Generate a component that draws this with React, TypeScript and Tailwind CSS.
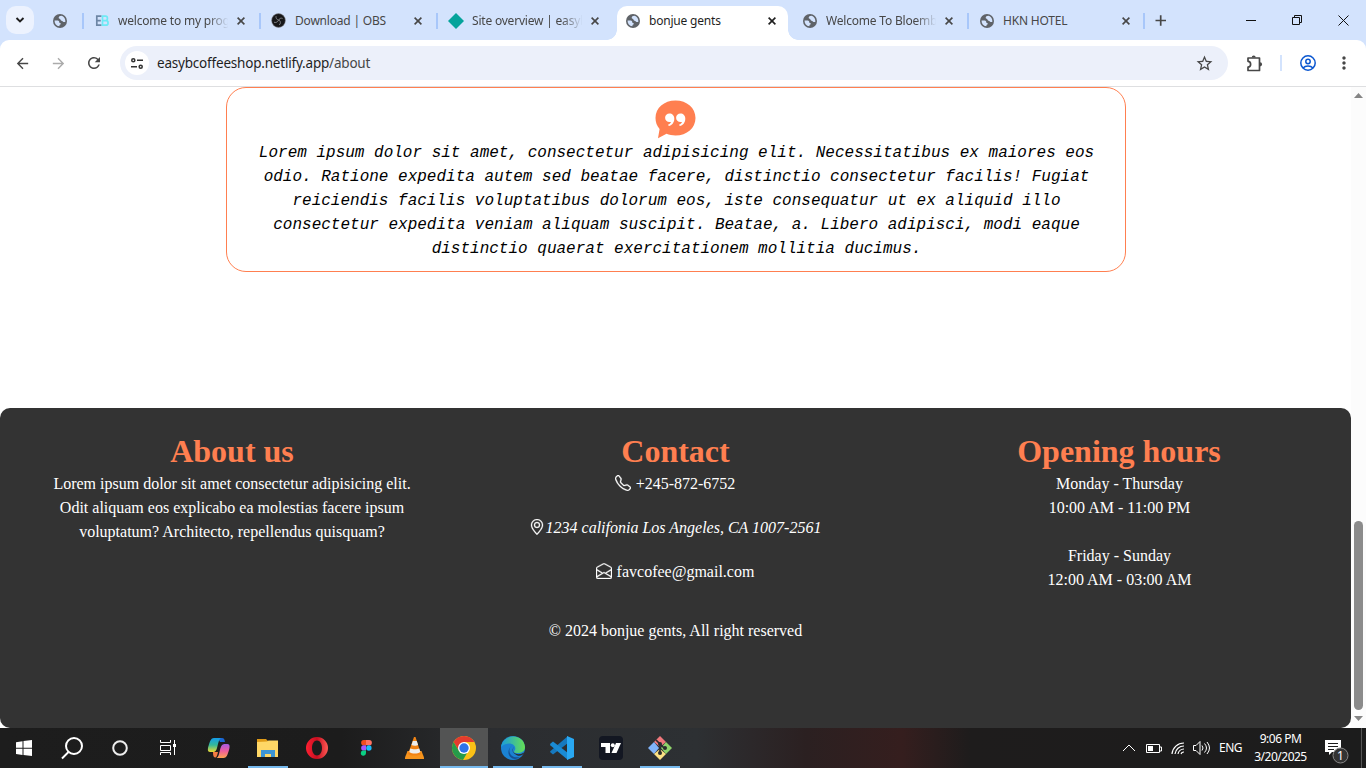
import React from "react";
import { BsTelephone, BsGeoAlt, BsEnvelopeOpen } from "react-icons/bs";
import { MdStarOutline, MdArrowBack, MdArrowForward, MdRefresh, MdMoreVert } from "react-icons/md";

function Globe() {
  return (
    <svg width="14" height="14" viewBox="0 0 14 14" className="shrink-0">
      <circle cx="7" cy="7" r="7" fill="#5f6368" />
      <path d="M1.6 6.5h2.6c1.3 0 2 .5 2 1.5 0 .7.4 1 1.4 1v1.5c-.7 0-1.1.4-1.3 1.7C3.300 12 1.500 9.500 1.600 6.500zM8.200 1.700C6.700 1.800 5.800 2.500 5.700 3.600c0 1 .6 1.400 1.500 1.500.2 1.200.8 1.800 2.100 1.800.6.900 1.500 1.100 3 1.100.5-3-1.200-5.600-4.100-6.300z" fill="#d3e3fd" />
    </svg>
  );
}

function Eb() {
  return (
    <svg width="14" height="14" viewBox="0 0 14 14" fill="none" className="shrink-0">
      <path d="M6.500 2.200H1.800v9h4.700M1.800 6.700h4" stroke="#6d86a5" strokeWidth="1.700" />
      <path d="M7.500 2.200h3.200c2.300 0 2.300 4.400 0 4.400H7.500h3.600c2.600 0 2.600 4.600 0 4.600H7.500z" stroke="#6deaf5" strokeWidth="1.700" />
    </svg>
  );
}

function Obs() {
  return (
    <svg width="15" height="15" viewBox="0 0 15 15" fill="none" className="shrink-0">
      <circle cx="7.500" cy="7.500" r="6.900" fill="#171719" stroke="#8c8f94" strokeWidth=".5" />
      <path d="M5 3.200c-.2 2 .8 3.500 2.700 4M11.600 5.400C9.800 4.700 8.200 5.500 7.700 7.200M8.200 12c1.600-1.300 1.600-3.400 0-4.800M3 9.200c1.600.8 3.400 0 4.600-2" stroke="#96989c" strokeWidth=".8" />
    </svg>
  );
}

function Cross({ dark }: { dark?: boolean }) {
  return (
    <svg width="8" height="8" viewBox="0 0 8 8" className="shrink-0">
      <path d="M.6.6l6.800 6.800M7.400.6L.6 7.400" stroke={dark ? "#1f1f1f" : "#474747"} strokeWidth="1.600" />
    </svg>
  );
}

function Tab({ icon, title, width, fade, sep = true }: { icon: React.ReactNode; title: string; width: string; fade?: boolean; sep?: boolean }) {
  return (
    <div className={`flex h-[41px] shrink-0 items-center ${width}`}>
      <div className="flex w-[15px] shrink-0 justify-center">{icon}</div>
      <div className={`ml-[9px] w-[115px] overflow-hidden whitespace-nowrap text-[#474747] ${fade ? "[mask-image:linear-gradient(to_right,#000_78%,transparent_96%)]" : ""}`}>{title}</div>
      <div className="ml-[4px] flex"><Cross /></div>
      {sep && <div className="ml-auto h-4 w-[2px] bg-[#a8c7fa]" />}
    </div>
  );
}

function TabStrip() {
  return (
    <div className="flex h-10 bg-[#d3e3fd] text-[12px] tracking-[-0.2px]">
      <div className="ml-[6px] mt-[6px] flex size-7 shrink-0 items-center justify-center rounded-[10px] bg-[#ecf2fe]">
        <svg width="10" height="6" viewBox="0 0 10 6" fill="none"><path d="M1.500 1L5 4.500 8.500 1" stroke="#1f1f1f" strokeWidth="1.900" /></svg>
      </div>
      <div className="flex h-[41px] w-[50px] shrink-0 items-center pl-[19px]"><Globe /><div className="ml-auto h-4 w-[2px] shrink-0 bg-[#a8c7fa]" /></div>
      <div className="w-[10px] shrink-0" />
      <Tab icon={<Eb />} title="welcome to my prog" width="w-[167px]" fade />
      <div className="w-[10px] shrink-0" />
      <Tab icon={<Obs />} title="Download | OBS" width="w-[167px]" />
      <div className="w-[10px] shrink-0" />
      <Tab icon={<svg width="16" height="16" viewBox="0 0 16 16" className="shrink-0"><path d="M8 0l8 8-8 8-8-8z" fill="#05a39b" /></svg>} title="Site overview | easyb" width="w-[159px]" fade sep={false} />
      <div className="flex h-10 w-[201px] shrink-0 items-end overflow-hidden">
        <div className="size-[10px] shrink-0 bg-[radial-gradient(circle_at_0_0,transparent_9.500px,white_10px)]" />
        <div className="flex h-[34px] w-[171px] shrink-0 items-center rounded-t-[10px] bg-white pb-[5px] pl-[9px]">
          <Globe /><span className="ml-[9px] w-[114px] text-[#1f1f1f]">bonjue gents</span><span className="ml-[5px]"><Cross dark /></span>
        </div>
        <div className="size-[10px] shrink-0 bg-[radial-gradient(circle_at_100%_0,transparent_9.500px,white_10px)]" />
      </div>
      <div className="-ml-[6px] shrink-0"><Tab icon={<Globe />} title="Welcome To Bloemb" width="w-[167px]" fade /></div>
      <div className="w-[10px] shrink-0" />
      <Tab icon={<Globe />} title="HKN HOTEL" width="w-[166px]" />
      <svg width="222" height="40" viewBox="1145 0 222 40" fill="none" className="shrink-0">
        <path d="M1155.500 20.500h10.500M1160.700 15.200v10.500" stroke="#474747" strokeWidth="1.700" />
        <path d="M1246 20.500h10M1292.500 17.500h7v7h-7zM1294.500 17v-1.500h7v7H1300M1338.500 15.500l10 10M1348.500 15.500l-10 10" stroke="#111" />
      </svg>
    </div>
  );
}

function Toolbar() {
  return (
    <div className="h-[47px] bg-[#d3e3fd]">
      <div className="flex h-[47px] items-center rounded-t-[9px] border-b border-[#dedfe1] bg-white text-[#474747]">
        <MdArrowBack size={17} className="ml-[14px]" />
        <MdArrowForward size={17} className="ml-[19px] text-[#ababab]" />
        <MdRefresh size={18} className="ml-[18px]" />
        <div className="ml-[17px] flex h-[34px] w-[1108px] items-center rounded-full bg-[#ecf0fa]">
          <div className="ml-[5px] flex size-6 items-center justify-center rounded-full bg-white">
            <svg width="12" height="11" viewBox="0 0 12 11" fill="none" stroke="#333" strokeWidth="1.500"><circle cx="2.300" cy="2.300" r="1.550" /><path d="M6 2.300h6M0 8.700h6" /><circle cx="9.700" cy="8.700" r="1.550" /></svg>
          </div>
          <div className="ml-[8px] text-[13.500px] tracking-[-0.2px] text-[#1f1f1f]">easybcoffeeshop.netlify.app<span className="text-[#474747]">/about</span></div>
          <MdStarOutline size={19} className="ml-auto mr-[14px]" />
        </div>
        <svg width="19" height="19" viewBox="0 0 19 19" className="ml-[17px]">
          <path d="M3 4h11.500v12.500H3v-3.300c3.500-.3 3.500-5.600 0-5.900z" fill="none" stroke="#474747" strokeWidth="1.700" strokeLinejoin="round" />
          <path d="M6.700 3.500a2 2 0 014 0zM15 8.200a2.100 2.100 0 010 4.200z" fill="#474747" />
        </svg>
        <div className="ml-[16px] h-4 w-[2px] bg-[#d3e3fd]" />
        <svg width="16" height="16" viewBox="0 0 16 16" fill="none" stroke="#0b57d0" strokeWidth="1.500" className="ml-[18px]"><circle cx="8" cy="8" r="7.200" /><circle cx="8" cy="6.500" r="2.200" /><path d="M3 13c2.500-2.700 7.500-2.700 10 0" /></svg>
        <MdMoreVert size={20} className="ml-[18px]" />
      </div>
    </div>
  );
}

function Quote() {
  return (
    <section className="mx-auto h-[185px] w-[900px] rounded-[20px] border border-[#ff7f50] pt-[11px] text-center">
      <svg width="42" height="40" viewBox="654 98.500 42 40" className="ml-[427px]">
        <path d="M675.500 100c11.500 0 20 7.600 20 17.500S687 135 675.500 135c-3.200 0-6.300-.6-9-1.700l-8.500 4.400 1.600-9.300c-2.700-2.900-4.100-6.700-4.100-10.900 0-9.900 8.500-17.500 20-17.500z" fill="#ff7f50" />
        <g fill="#fff"><path d="M669.500 113c2.700 0 4.800 2 4.800 5.200 0 3.800-2.500 6.800-5.600 7.400l-.6-1.500c1.500-.5 2.600-1.500 2.900-2.700-3.400.8-5.900-1.300-5.900-4.100 0-2.400 1.900-4.300 4.400-4.300zM680.500 113c2.700 0 4.800 2 4.800 5.200 0 3.800-2.500 6.800-5.600 7.400l-.6-1.500c1.500-.5 2.600-1.500 2.900-2.700-3.400.8-5.900-1.300-5.900-4.100 0-2.400 1.900-4.300 4.400-4.300z" /></g>
      </svg>
      <p className="mt-[2px] pl-[2px] font-['Liberation_Mono',monospace] text-[16px] leading-6 text-black italic">
        Lorem ipsum dolor sit amet, consectetur adipisicing elit. Necessitatibus ex maiores eos<br />
        odio. Ratione expedita autem sed beatae facere, distinctio consectetur facilis! Fugiat<br />
        reiciendis facilis voluptatibus dolorum eos, iste consequatur ut ex aliquid illo<br />
        consectetur expedita veniam aliquam suscipit. Beatae, a. Libero adipisci, modi eaque<br />
        distinctio quaerat exercitationem mollitia ducimus.
      </p>
    </section>
  );
}

function Footer() {
  const heading = "text-[32px] leading-[48px] font-bold text-[#ff7f50]";
  const glyph = "mb-[2px] -ml-px mr-px [stroke-width:0.3]";
  return (
    <footer className="mt-[136px] h-[320px] rounded-[10px] bg-[#333] pt-[16px] text-center font-['Liberation_Serif',serif] text-[16px] leading-6 text-white">
      <div className="flex h-[195px] pt-[3px]">
        <div className="w-[464px]"><h2 className={heading}>About us</h2><p className="-mt-[3px]">Lorem ipsum dolor sit amet consectetur adipisicing elit.<br />Odit aliquam eos explicabo ea molestias facere ipsum<br />voluptatum? Architecto, repellendus quisquam?</p></div>
        <div className="w-[423px]">
          <h2 className={heading}>Contact</h2>
          <p className="-mt-[3px] flex items-center justify-center gap-1"><BsTelephone className={glyph} />+245-872-6752</p>
          <address className="mt-5 flex items-center justify-center"><BsGeoAlt className={glyph} />1234 califonia Los Angeles, CA 1007-2561</address>
          <p className="mt-5 flex items-center justify-center gap-1"><BsEnvelopeOpen className={glyph} />favcofee@gmail.com</p>
        </div>
        <div className="w-[464px]"><h2 className={heading}>Opening hours</h2><p className="-mt-[3px] pl-px">Monday - Thursday<br />10:00 AM - 11:00 PM<br /><br />Friday - Sunday<br />12:00 AM - 03:00 AM</p></div>
      </div>
      <p>© 2024 bonjue gents, All right reserved</p>
    </footer>
  );
}

function AppIcon({ children, state = "", narrow }: { children: React.ReactNode; state?: string; narrow?: boolean }) {
  return (
    <div className={`h-10 shrink-0 ${narrow ? "w-12" : "w-[49px] pr-px"}`}>
      <div className={`flex h-10 flex-col items-center ${state === "active" ? "bg-[#535454]" : ""}`}>
        <svg width="28" height="28" viewBox="0 0 28 28" className="mt-[6px] shrink-0">{children}</svg>
        {state && <div className={`mt-[4px] h-[2px] bg-[#76b9ed] ${state === "active" ? "w-full" : "w-10"}`} />}
      </div>
    </div>
  );
}

function Taskbar() {
  return (
    <div className="flex h-10 bg-[linear-gradient(90deg,#1d1d1d_0%,#1c1c1c_25%,#2b2d30_36%,#2d3033_51%,#2b2021_59%,#351e1e_66%,#1e1c1c_71%,#1c1c1c_100%)] text-white">
      <AppIcon narrow><path fill="#fff" d="M6 8.200l6.500-1v6.500H6zM13.500 7L22 6v7.700h-8.500zM6 14.700h6.500v6.400l-6.500-1zM13.500 14.700H22V22l-8.500-1z" /></AppIcon>
      <AppIcon narrow><g fill="none" stroke="#fff" strokeWidth="2"><circle cx="16" cy="12" r="8" /><path d="M10.500 18L4 24.500" /></g></AppIcon>
      <AppIcon narrow><circle cx="14" cy="14" r="6.800" fill="none" stroke="#eee" strokeWidth="2" /></AppIcon>
      <AppIcon narrow><g fill="none" stroke="#fff"><path d="M6.500 6v2.500h10V6M6.500 21v-2.500h10V21M6.500 11.500h10v5h-10zM20.500 6v15" /><path d="M19 11.500h3" strokeWidth="3" /></g></AppIcon>
      <div className="w-[3px] shrink-0" />
      <AppIcon>
        <defs>
          <linearGradient id="cpa" x1="0" y1="0" x2="0" y2="1"><stop stopColor="#139ce9" /><stop offset=".5" stopColor="#34b99a" /><stop offset="1" stopColor="#eedb31" /></linearGradient>
          <linearGradient id="cpb" x1="0" y1="0" x2="0" y2="1"><stop stopColor="#a45ae5" /><stop offset=".5" stopColor="#ef5d9c" /><stop offset="1" stopColor="#ffa450" /></linearGradient>
        </defs>
        <path fill="#1a66d4" d="M13 4h4c2 0 2.500 1.500 3 4h-5z" />
        <path fill="url(#cpa)" d="M9 4h7c-2 1-2.500 4-3.500 8-1 4-1.500 6-5 6H5c-2.500 0-2.500-3-1.500-6C5 7 6 4 9 4z" />
        <path fill="url(#cpb)" d="M20 10h2.500c2.500 0 2.500 3 1.500 6-1.500 5-2.500 8-5.500 8h-7c2-1 2.500-4 3.500-8 1-4 2-6 5-6z" />
        <path fill="#f47c43" d="M8 18h5c-1 4-1.500 5.500-3 5.500S8 21 8 18z" />
      </AppIcon>
      <AppIcon state="open"><path fill="#e09b17" d="M3 5h9l2 2v3H3z" /><path fill="#ffd766" d="M3 8l10-.5 1.500-1H24V23H3z" /><path fill="#3d95d4" d="M7 23v-7h14v7h-4v-3h-6v3z" /></AppIcon>
      <AppIcon><defs><linearGradient id="op"><stop stopColor="#ff2032" /><stop offset=".5" stopColor="#c70e20" /><stop offset="1" stopColor="#ff5b55" /></linearGradient></defs><path fill="url(#op)" fillRule="evenodd" d="M14 3a11 11 0 100 22 11 11 0 000-22zm0 3.500c3 0 5 3.400 5 7.500s-2 7.500-5 7.500-5-3.400-5-7.500 2-7.500 5-7.500z" /></AppIcon>
      <AppIcon><path fill="#f24e1e" d="M14 6h-2.200a2.600 2.600 0 000 5.300H14z" /><path fill="#ff7262" d="M14 6h3.200a2.600 2.600 0 010 5.300H14z" /><path fill="#a259ff" d="M14 11.300h-2.200a2.600 2.600 0 000 5.300H14z" /><circle cx="16.900" cy="14" r="2.700" fill="#1abcfe" /><path fill="#0acf83" d="M14 16.600h-2.200a2.600 2.600 0 102.200 2.700z" /></AppIcon>
      <AppIcon><path fill="#f6941d" d="M4 23.500L6.500 17h14l2.500 6.500v1.500H4z" /><path fill="#f28314" d="M13 3h1.500l5.500 17c-2 2-11 2-13 0z" /><path fill="#eee" d="M11.800 7h4l1.300 4c-1.500 1-5 1-6.600 0zM9.300 14.500c2 1 7 1 9 0l1 3.400c-3 2-8 2-11 0z" /></AppIcon>
      <AppIcon state="active"><circle cx="14" cy="14" r="12" fill="#fbc116" /><path fill="#e33b2e" d="M3.600 8A12 12 0 0124.400 8H14L9 17z" /><path fill="#269b4a" d="M3.600 8A12 12 0 0013 26l5.500-9.500L9 17z" /><circle cx="14" cy="14" r="6" fill="#fff" /><circle cx="14" cy="14" r="4.700" fill="#2e73e8" /></AppIcon>
      <AppIcon state="open">
        <defs><linearGradient id="ea"><stop stopColor="#199bdd" /><stop offset="1" stopColor="#65df53" /></linearGradient></defs>
        <circle cx="14" cy="14" r="12" fill="#1b82d2" /><path fill="url(#ea)" d="M2 13C4-1 25-1 26 13c0 4-3 6-8 6-3 0-4-1-2-3 2-5-6-10-14-3z" /><path fill="#174f91" d="M13 11c-6 6-1 14 8 12-7 6-17-3-8-12z" /><path fill="#2c2e31" d="M15 13c-3 4 0 8 7 7l4-2c-2 4-7 5-10 2-3-2-3-5-1-7z" />
      </AppIcon>
      <AppIcon state="open"><path fill="#1679bf" d="M2 18l3 2.500L20 9V2L2.500 17z" /><path fill="#1a8bd4" d="M2 10l3-2.500L20 19v7L2.500 11.500z" /><path fill="#29a8f2" d="M19 2l7 3v18l-7 3z" /></AppIcon>
      <AppIcon><rect x="2" y="2" width="24" height="24" rx="4" fill="#131722" /><path fill="#fff" d="M4 9h9v10H8.500v-6H4z" /><circle cx="15.800" cy="11.200" r="2" fill="#fff" /><path fill="#fff" d="M19 9h5l-4.500 10h-5z" /></AppIcon>
      <AppIcon state="open"><path fill="#f0787c" d="M14 2l6 6-6 5-6-5z" /><path fill="#80b4fa" d="M8 8l5 6-5 6-6-6z" /><path fill="#8fd36b" d="M20 8l6 6-6 6-5-6z" /><path fill="#fbe184" d="M14 15l6 5-6 6-6-6z" /><g fill="none" stroke="#292b2e" strokeWidth="1.700"><path d="M10 6l4 4v9M14 10l4 4" /></g><g fill="#292b2e"><circle cx="14" cy="10" r="2" /><circle cx="14" cy="19" r="2" /><circle cx="19" cy="14" r="2" /></g></AppIcon>
      <div className="ml-auto flex items-center">
        <svg width="92" height="40" viewBox="1120 728 92 40" fill="none" stroke="#fff"><path d="M1123 751l6-6 6 6M1146.500 744.500h13v8h-13zM1160 747h1.500v4h-1.500" /><path fill="#fff" stroke="none" d="M1148 746h5v5h-5z" /><path d="M1172 754a12 12 0 0112-11M1175 754a9 9 0 019-8M1178 754a6 6 0 016-5M1181 754a3 3 0 013-2" strokeWidth="1.200" /><path d="M1193.500 745.500v5h2.500l4 4v-13l-4 4zM1202 745.500q2 2.500 0 5M1204.500 743.500q4 4.500 0 9M1207 742q5 6 0 12" /></svg>
        <span className="ml-[7px] w-[23px] text-[12px] tracking-[-0.5px]">ENG</span>
        <div className="ml-[12px] mr-px w-[53px] text-center text-[12px] leading-[18px] tracking-[-0.5px] whitespace-nowrap">9:06 PM<br />3/20/2025</div>
        <svg width="58" height="40" viewBox="1308 728 58 40" className="shrink-0"><path fill="#fff" d="M1325 740h16v12h-9l-3 3v-3h-4z" /><path d="M1328 743.500h10M1328 746.500h10M1328 749.500h6" stroke="#1c1c1c" /><circle cx="1340.500" cy="755.500" r="7.500" fill="#333" stroke="#888" /><text x="1337" y="760" fill="#fff" fontSize="12">1</text><path d="M1361.500 728v40" stroke="#555" /></svg>
      </div>
    </div>
  );
}

export default function App() {
  return (
    <div className="h-[768px] w-[1366px] overflow-hidden bg-white font-['Noto_Sans',sans-serif]">
      <TabStrip />
      <Toolbar />
      <div className="flex h-[641px]">
        <main className="w-[1351px]"><Quote /><Footer /></main>
        <div className="flex w-[15px] flex-col items-center bg-[#fcfcfc]">
          <svg width="9" height="5" viewBox="0 0 9 5" className="mt-[6px]"><path d="M4.500 0L9 5H0z" fill="#858585" /></svg>
          <div className="mt-[423px] h-[189px] w-[9px] rounded-full bg-[#8b8b8b]" />
          <svg width="9" height="5" viewBox="0 0 9 5" className="mt-[6px]"><path d="M0 0h9L4.500 5z" fill="#858585" /></svg>
        </div>
      </div>
      <Taskbar />
    </div>
  );
}
